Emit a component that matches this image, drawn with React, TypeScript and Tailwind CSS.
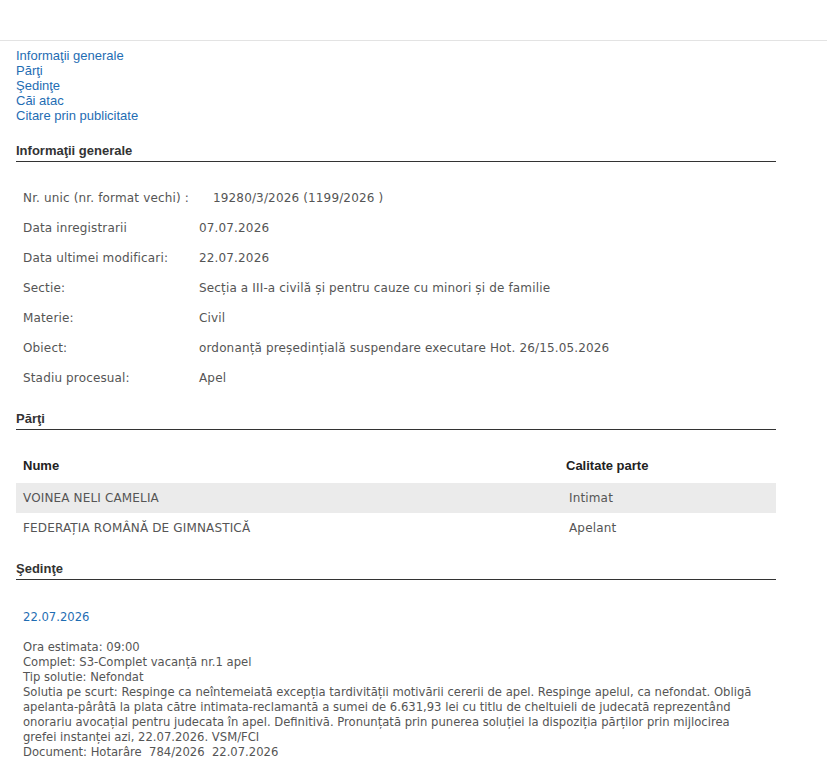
const body = { fontFamily: '"DejaVu Sans", Verdana, sans-serif' };
const arial = { fontFamily: '"Liberation Sans", Arial, sans-serif' };

const info: [string, string][] = [
  ["Nr. unic (nr. format vechi) :", "19280/3/2026 (1199/2026 )"],
  ["Data inregistrarii", "07.07.2026"],
  ["Data ultimei modificari:", "22.07.2026"],
  ["Sectie:", "Secția a III-a civilă și pentru cauze cu minori și de familie"],
  ["Materie:", "Civil"],
  ["Obiect:", "ordonanță președințială suspendare executare Hot. 26/15.05.2026"],
  ["Stadiu procesual:", "Apel"],
];

const parti = [
  { nume: "VOINEA NELI CAMELIA", calitate: "Intimat" },
  { nume: "FEDERAȚIA ROMÂNĂ DE GIMNASTICĂ", calitate: "Apelant" },
];

function SectionTitle({ children }: { children: React.ReactNode }) {
  return (
    <h2
      style={arial}
      className="border-b border-[#333] pb-[3px] text-[13px] font-bold leading-[15px] text-[#333]"
    >
      {children}
    </h2>
  );
}

export default function App() {
  return (
    <div className="min-h-screen bg-white">
      <div className="h-[41px] border-b border-[#e3e3e3]" />
      <div className="w-[776px] pl-4 pt-[7px]">
        <nav style={arial} className="flex flex-col text-[13px] leading-[15px] text-[#1f6db3]">
          <a href="#info">Informaţii generale</a>
          <a href="#parti">Părţi</a>
          <a href="#sedinte">Şedinţe</a>
          <a href="#cai">Căi atac</a>
          <a href="#citare">Citare prin publicitate</a>
        </nav>

        <div className="mt-[20px]">
          <SectionTitle>Informaţii generale</SectionTitle>
          <div style={body} className="mt-[21px] text-[12px] tracking-[0.15px] text-[#555]">
            {info.map(([k, v], i) => (
              <div key={k} className="flex h-[30px] items-center px-[7px]">
                <span className="w-[176px] shrink-0">{k}</span>
                <span className={i === 0 ? "pl-[14px]" : ""}>{v}</span>
              </div>
            ))}
          </div>
        </div>

        <div className="mt-[18px]">
          <SectionTitle>Părţi</SectionTitle>
          <div className="mt-[21px]">
            <div style={arial} className="flex h-[32px] items-center px-[7px] pb-[2px] text-[13px] font-bold text-[#222]">
              <span className="w-[543px]">Nume</span>
              <span>Calitate parte</span>
            </div>
            {parti.map((p, i) => (
              <div
                key={p.nume}
                style={body}
                className={`flex h-[30px] items-center px-[7px] text-[12px] tracking-[0.15px] text-[#555] ${i % 2 === 0 ? "bg-[#ebebeb]" : ""}`}
              >
                <span className="w-[543px]">{p.nume}</span>
                <span className="pl-[3px]">{p.calitate}</span>
              </div>
            ))}
          </div>
        </div>

        <div className="mt-[18px]">
          <SectionTitle>Şedinţe</SectionTitle>
          <div style={body} className="mt-[30px] px-[7px] text-[11.6px] leading-[15px] text-[#555]">
            <a href="#s1" className="text-[#1f6db3]">22.07.2026</a>
            <div className="mt-[15px] w-[740px]">
              <div>Ora estimata: 09:00</div>
              <div>Complet: S3-Complet vacanță nr.1 apel</div>
              <div>Tip solutie: Nefondat</div>
              <div>
                Solutia pe scurt: Respinge ca neîntemeiată excepția tardivității motivării cererii de apel. Respinge
                apelul, ca nefondat. Obligă apelanta-pârâtă la plata către intimata-reclamantă a sumei de 6.631,93 lei
                cu titlu de cheltuieli de judecată reprezentând onorariu avocațial pentru judecata în apel. Definitivă.
                Pronunțată prin punerea soluției la dispoziția părților prin mijlocirea grefei instanței azi, 22.07.2026.
                VSM/FCI
              </div>
              <div>Document: Hotarâre&nbsp; 784/2026&nbsp; 22.07.2026</div>
            </div>
          </div>
        </div>
      </div>
    </div>
  );
}
